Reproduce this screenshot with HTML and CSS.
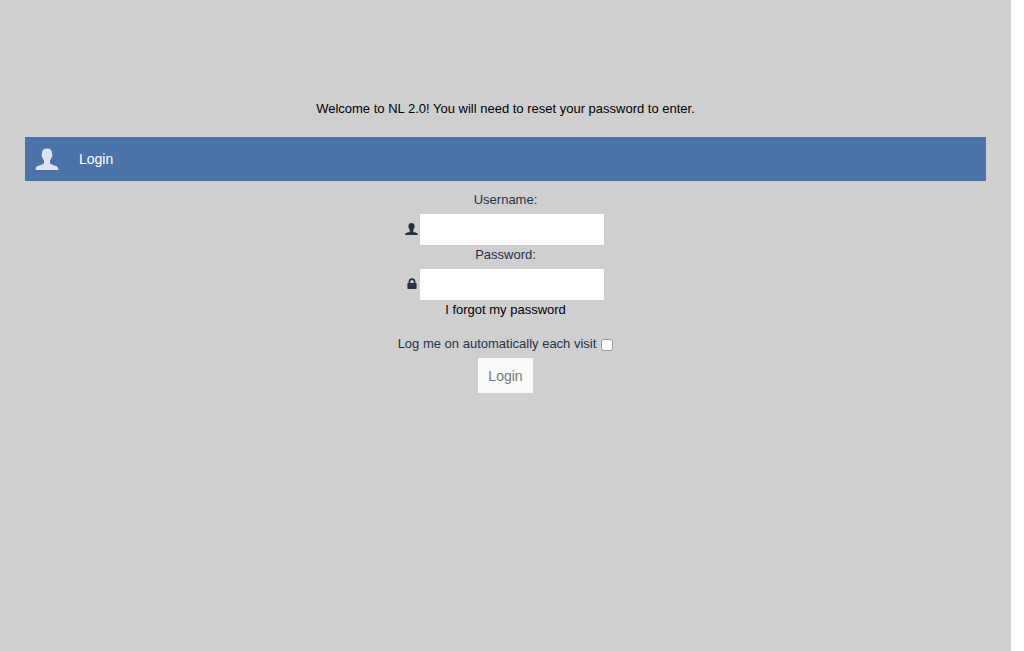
FILE: index.html
```html
<!DOCTYPE html>
<html lang="en">
<head>
  <meta charset="UTF-8">
  <meta name="viewport" content="width=device-width, initial-scale=1">
  <title>Login</title>
  <link rel="stylesheet" href="styles.css">
</head>
<body>
  <svg class="sprite" aria-hidden="true">
    <symbol id="user" viewBox="0 0 24 22">
      <path d="M12 .6C8.500.6 6.900 2.300 7 5.500C6.300 5.900 6.500 8.600 7.300 9.100C7.600 10.800 8.300 11.800 9 12.500V15.200C8.500 16.400 5 17.200 2.800 18C1.300 18.600.7 19.800.6 22H23.400C23.300 19.800 22.700 18.600 21.200 18C19 17.200 15.500 16.400 15 15.200V12.500C15.700 11.800 16.400 10.800 16.700 9.100C17.500 8.600 17.700 5.900 17 5.500C17.100 2.300 15.500.6 12 .6Z"/>
    </symbol>
    <symbol id="user-small" viewBox="0 0 13 13">
      <path d="M6.500 0C4.500 0 3.500 1.100 3.500 3C3.200 3.500 3.400 4.600 3.800 4.900C4 5.900 4.500 6.600 4.800 7V8.500C4.400 9.200 2.800 9.400 1.400 9.900C.4 10.300 0 10.800 0 12H13C13 10.800 12.600 10.300 11.600 9.900C10.200 9.400 8.600 9.200 8.200 8.500V7C8.500 6.600 9 5.900 9.200 4.900C9.600 4.600 9.800 3.500 9.500 3C9.500 1.100 8.500 0 6.500 0Z"/>
    </symbol>
    <symbol id="lock" viewBox="0 0 13 13">
      <path fill-rule="evenodd" d="M3.600 5V3.600a3.400 3.400 0 0 1 6.800 0V5H10.800a.8.8 0 0 1 .8.800V10.300a.8.8 0 0 1-.8.800H3.200a.8.8 0 0 1-.8-.8V5.800A.8.8 0 0 1 3.200 5ZM5.300 5h3.400V3.600a1.700 1.700 0 0 0-3.400 0Z"/>
    </symbol>
  </svg>

  <p class="welcome">Welcome to NL 2.0! You will need to reset your password to enter.</p>

  <header class="title-bar">
    <svg class="title-icon"><use href="#user"/></svg>
    <h1>Login</h1>
  </header>

  <form class="login-form">
    <label for="username">Username:</label>
    <div class="field">
      <svg class="field-icon"><use href="#user-small"/></svg>
      <input type="text" id="username" name="username">
    </div>

    <label for="password">Password:</label>
    <div class="field">
      <svg class="field-icon"><use href="#lock"/></svg>
      <input type="password" id="password" name="password">
    </div>

    <a class="forgot" href="#">I forgot my password</a>

    <div class="remember">
      <label for="autologin">Log me on automatically each visit</label>
      <input type="checkbox" id="autologin" name="autologin">
    </div>

    <button type="submit">Login</button>
  </form>
</body>
</html>
```
FILE: styles.css
```css
* {
  box-sizing: border-box;
}

html {
  background-color: #fff;
}

body {
  margin: 0 13px 0 0;
  padding: 99px 25px 0;
  min-height: 100vh;
  background-color: #cfcfcf;
  color: #283144;
  font-family: "Liberation Sans", Arial, sans-serif;
  font-size: 13px;
  line-height: 20px;
}

.sprite {
  display: none;
}

.welcome {
  margin: 0 0 18px;
  color: #000;
  text-align: center;
}

.title-bar {
  display: flex;
  align-items: center;
  gap: 20px;
  height: 44px;
  padding: 0 10px;
  background-color: #4b73aa;
  color: #fff;
}

.title-icon {
  width: 24px;
  height: 22px;
  fill: #dbe4f0;
}

.title-bar h1 {
  margin: 0;
  font-size: 14px;
  font-weight: normal;
}

.login-form {
  display: flex;
  flex-direction: column;
  align-items: center;
  padding-top: 9px;
}

.login-form label {
  margin-bottom: 4px;
}

.field {
  display: flex;
  align-items: center;
  gap: 2px;
  padding-right: 2px;
}

.field-icon {
  width: 13px;
  height: 13px;
  fill: #283144;
}

.field input {
  width: 184px;
  height: 31px;
  padding: 6px;
  border: 0;
  background-color: #fff;
  font: inherit;
}

.forgot {
  margin-bottom: 14px;
  color: #000;
  text-decoration: none;
}

.remember {
  display: flex;
  gap: 5px;
}

.remember input {
  appearance: none;
  width: 12px;
  height: 12px;
  margin: 5px 0 0;
  border: 1px solid #999;
  border-radius: 3px;
  background-color: #fff;
}

.remember input:checked {
  background-color: #4b73aa;
}

button {
  height: 35px;
  padding: 0 10px;
  border: 0;
  background-color: #f8f9f9;
  color: #777;
  font: 14px "Liberation Sans", Arial, sans-serif;
  cursor: pointer;
}
```
